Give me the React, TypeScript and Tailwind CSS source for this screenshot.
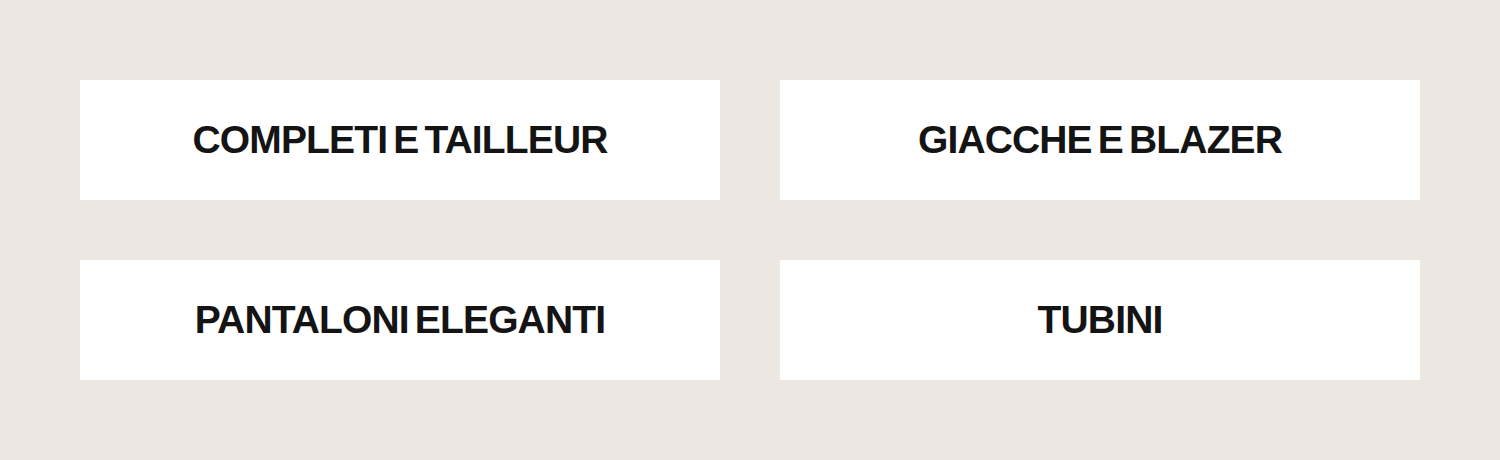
import React from "react";

const items = ["COMPLETI E TAILLEUR", "GIACCHE E BLAZER", "PANTALONI ELEGANTI", "TUBINI"];

export default function App() {
  return (
    <div className="w-[1500px] h-[460px] bg-[#ece7e0] p-[80px]">
      <div className="grid grid-cols-2 gap-[60px]">
        {items.map((t) => (
          <div
            key={t}
            className="h-[120px] bg-white flex items-center justify-center text-[#141414] font-bold text-[39px] tracking-[-0.022em] [word-spacing:-0.1em]"
            style={{ fontFamily: '"Liberation Sans", Arial, sans-serif' }}
          >
            {t}
          </div>
        ))}
      </div>
    </div>
  );
}
